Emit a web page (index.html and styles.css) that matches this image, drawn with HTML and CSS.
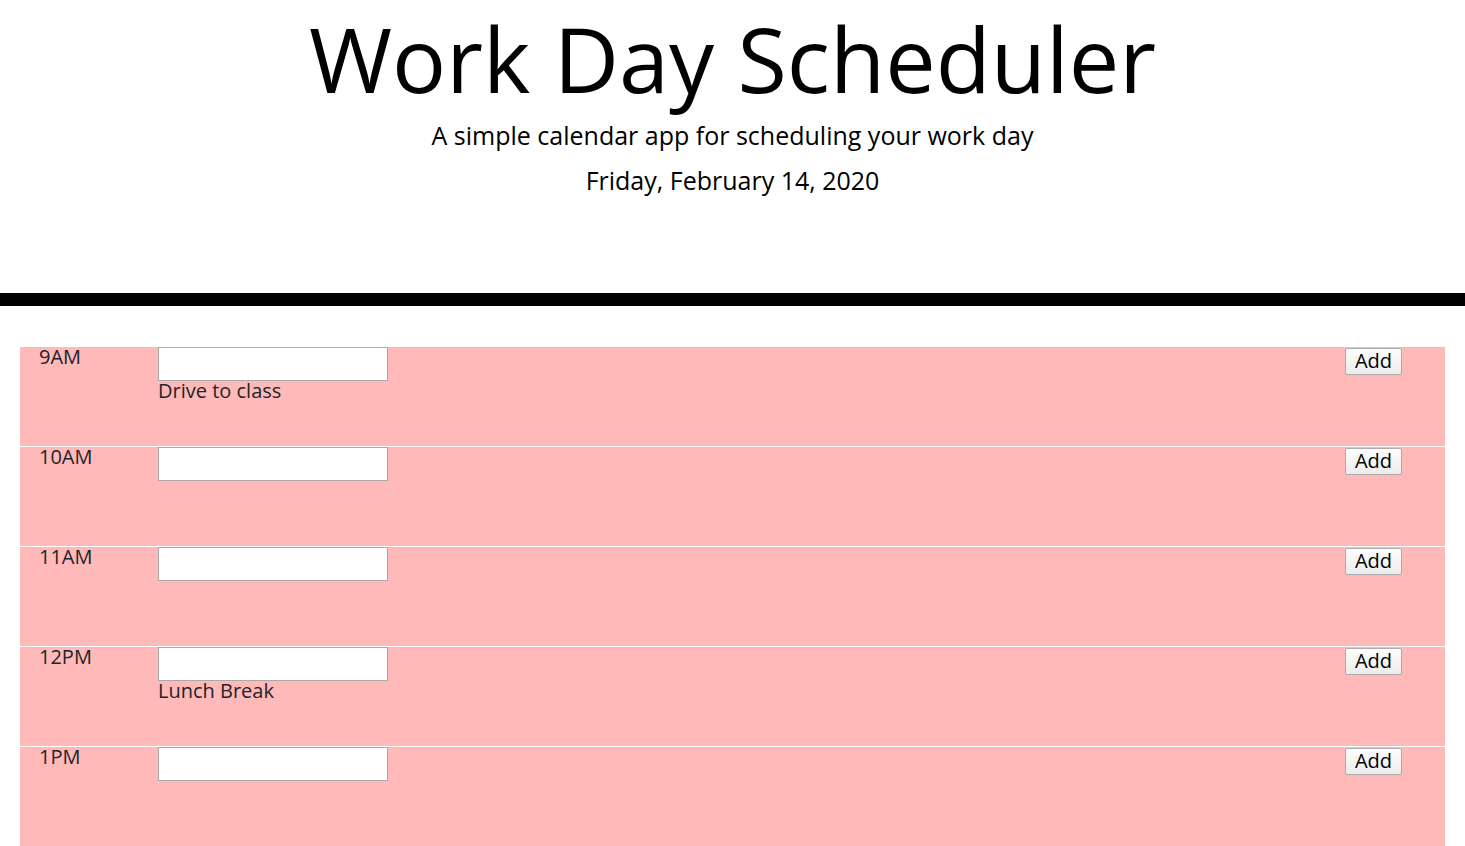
FILE: index.html
```html
<!DOCTYPE html>
<html lang="en">
<head>
<meta charset="utf-8">
<title>Work Day Scheduler</title>
<link rel="stylesheet" href="styles.css">
</head>
<body>
<header class="jumbotron">
  <h1 class="title">Work Day Scheduler</h1>
  <p class="lead">A simple calendar app for scheduling your work day</p>
  <p class="date">Friday, February 14, 2020</p>
</header>
<main class="schedule">
  <div class="hour-row">
    <div class="hour">9AM</div>
    <div class="task"><input class="task-input" type="text"><div class="task-text">Drive to class</div></div>
    <div class="action"><button class="add-btn">Add</button></div>
  </div>
  <div class="hour-row">
    <div class="hour">10AM</div>
    <div class="task"><input class="task-input" type="text"></div>
    <div class="action"><button class="add-btn">Add</button></div>
  </div>
  <div class="hour-row">
    <div class="hour">11AM</div>
    <div class="task"><input class="task-input" type="text"></div>
    <div class="action"><button class="add-btn">Add</button></div>
  </div>
  <div class="hour-row">
    <div class="hour">12PM</div>
    <div class="task"><input class="task-input" type="text"><div class="task-text">Lunch Break</div></div>
    <div class="action"><button class="add-btn">Add</button></div>
  </div>
  <div class="hour-row">
    <div class="hour">1PM</div>
    <div class="task"><input class="task-input" type="text"></div>
    <div class="action"><button class="add-btn">Add</button></div>
  </div>
</main>
</body>
</html>
```
FILE: styles.css
```css
html, body {
  margin: 0;
  padding: 0;
  background: #fff;
  font-family: "Open Sans", "Liberation Sans", sans-serif;
  color: #000;
}

.jumbotron {
  text-align: center;
  border-bottom: 13px solid #000;
  height: 293px;
  box-sizing: content-box;
}

.title {
  margin: 0;
  padding-top: 0;
  font-size: 90px;
  font-weight: 400;
  line-height: 116px;
}

.lead {
  margin: 2px 0 0;
  font-size: 25px;
  line-height: 34px;
}

.date {
  margin: 11px 0 0;
  font-size: 25px;
  line-height: 34px;
}

.schedule {
  margin: 41px 20px 0;
}

.hour-row {
  display: grid;
  grid-template-columns: 138px 1fr auto;
  height: 99px;
  background: #ffb9b9;
  border-bottom: 1px solid #fff;
  color: #212529;
  font-size: 20px;
}

.hour {
  padding-left: 19px;
  line-height: 20px;
}

.task {
  display: flex;
  flex-direction: column;
  align-items: flex-start;
}

.task-input {
  width: 230px;
  height: 34px;
  box-sizing: border-box;
  margin: 0;
  border: 1px solid #a9a9a9;
  background: #fff;
  font-family: inherit;
  font-size: 18px;
}

.task-text {
  font-size: 20px;
  line-height: 20px;
  color: #212529;
}

.action {
  padding-right: 43px;
}

.add-btn {
  width: 57px;
  height: 27px;
  margin: 0;
  padding: 0;
  border: 1px solid #adadad;
  border-radius: 2px;
  background: linear-gradient(#fdfdfd, #ececec);
  font-family: inherit;
  font-size: 20px;
  line-height: 24px;
  color: #000;
}
```
